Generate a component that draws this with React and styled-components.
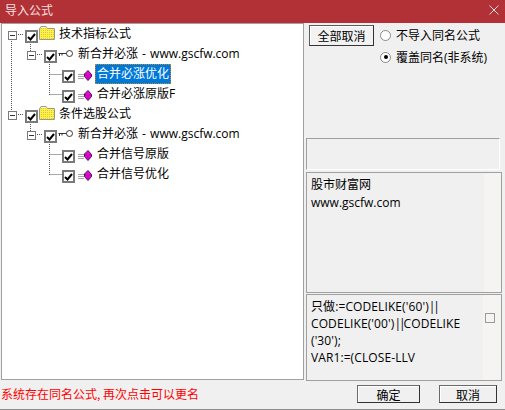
import React from 'react';
import styled, { createGlobalStyle } from 'styled-components';

const GlobalStyle = createGlobalStyle`
   html, body {
      margin: 0;
      padding: 0;
      background: #F0F0F0;
   }
   body {
      font-family: "Open Sans", "Noto Sans CJK SC", sans-serif;
      font-size: 12px;
      color: #000;
   }
`;

const tree = [
   { level: 0, kind: 'folder', label: '技术指标公式' },
   { level: 1, kind: 'key', label: '新合并必涨 - www.gscfw.com' },
   { level: 2, kind: 'gem', label: '合并必涨优化', selected: true },
   { level: 2, kind: 'gem', label: '合并必涨原版F' },
   { level: 0, kind: 'folder', label: '条件选股公式' },
   { level: 1, kind: 'key', label: '新合并必涨 - www.gscfw.com' },
   { level: 2, kind: 'gem', label: '合并信号原版' },
   { level: 2, kind: 'gem', label: '合并信号优化' },
];

const FolderIcon = () => (
   <svg width="17" height="14" viewBox="0 0 17 14">
      <defs>
         <pattern id="dither" width="2" height="2" patternUnits="userSpaceOnUse">
            <rect width="2" height="2" fill="#FFF04A" />
            <rect width="1" height="1" fill="#D9C93A" />
         </pattern>
      </defs>
      <path d="M0.5 3 L2 0.5 H7 L8.5 2.5 H15.5 V13.5 H0.5 Z" fill="url(#dither)" stroke="#9A9A80" />
      <path d="M2 1.5 H7" stroke="#FFFDE0" />
   </svg>
);

const KeyIcon = () => (
   <svg width="15" height="8" viewBox="0 0 15 8">
      <circle cx="11.5" cy="3.5" r="3" fill="#FFF" stroke="#333" />
      <path d="M8.5 3.5 H0.5 M1.5 3.5 V6 M4 3.5 V5.5" stroke="#333" fill="none" />
   </svg>
);

const GemIcon = () => (
   <svg width="17" height="11" viewBox="0 0 17 11">
      <path d="M3 4.5 H9 M3 6.5 H9 M3 8.5 H9" stroke="#A8A8A8" />
      <path d="M13 0.5 L16.5 4.5 V6.5 L13 10.5 L9.5 6.5 V4 Z" fill="#F000E0" stroke="#4A1050" />
      <path d="M10 4.5 L13 6 L16 4.5 M13 6 V10" stroke="#A0109A" fill="none" />
   </svg>
);

const icons = { folder: <FolderIcon />, key: <KeyIcon />, gem: <GemIcon /> };

const TreeGuides = () => (
   <GuideLayer width="100" height="170" viewBox="0 0 100 170">
      <path
         d="M10.5 15 V86 M15 10.5 H23 M29.5 20 V27 M34 30.5 H42 M48.5 40 V71 M48.5 50.5 H61 M48.5 70.5 H61 M15 90.5 H23 M29.5 100 V107 M34 110.5 H42 M48.5 120 V151 M48.5 130.5 H61 M48.5 150.5 H61"
         stroke="#555"
         strokeDasharray="1 1"
         fill="none"
      />
   </GuideLayer>
);

const TreeRow = ({ level, kind, label, selected }) => (
   <Row $level={level}>
      {level < 2 && <Expander />}
      <CheckBox>
         <svg width="9" height="8" viewBox="0 0 9 8">
            <path d="M1 4 L3.5 6.5 L8 1" stroke="#000" strokeWidth="2" fill="none" />
         </svg>
      </CheckBox>
      <IconSlot $kind={kind}>{icons[kind]}</IconSlot>
      <RowLabel $selected={selected}>{label}</RowLabel>
   </Row>
);

const App = () => {
   return (
      <Dialog>
         <GlobalStyle />
         <TitleBar>
            <span>导入公式</span>
            <svg width="10" height="10" viewBox="0 0 10 10">
               <path d="M0.5 0.5 L9.5 9.5 M9.5 0.5 L0.5 9.5" stroke="#F3DADA" fill="none" />
            </svg>
         </TitleBar>

         <Main>
            <TreePanel>
               <TreeGuides />
               {tree.map((item, i) => (
                  <TreeRow key={i} {...item} />
               ))}
            </TreePanel>

            <SidePanel>
               <OptionBar>
                  <ClearButton>全部取消</ClearButton>
                  <RadioGroup>
                     <RadioRow>
                        <Radio />
                        不导入同名公式
                     </RadioRow>
                     <RadioRow>
                        <Radio $checked />
                        覆盖同名(非系统)
                     </RadioRow>
                  </RadioGroup>
               </OptionBar>
               <EmptyBox />
               <InfoBox>
                  股市财富网
                  <br />
                  www.gscfw.com
               </InfoBox>
               <CodeBox>
                  <CodeText>
                     只做:=CODELIKE('60')<Pipes>||</Pipes>
                     <br />
                     CODELIKE('00')<Pipes>||</Pipes>CODELIKE
                     <br />
                     ('30');
                     <br />
                     VAR1:=(CLOSE-LLV
                  </CodeText>
                  <ScrollGutter>
                     <SmallBox />
                  </ScrollGutter>
               </CodeBox>
            </SidePanel>
         </Main>

         <Footer>
            <Notice>系统存在同名公式, 再次点击可以更名</Notice>
            <FooterButton $width={63}>确定</FooterButton>
            <FooterButton $width={58}>取消</FooterButton>
         </Footer>
      </Dialog>
   );
};

const Dialog = styled.div`
   width: 505px;
   height: 410px;
   display: flex;
   flex-direction: column;
   box-sizing: border-box;
   border-bottom: 1px solid #8C8C8C;
   background: #F0F0F0;
   overflow: hidden;
`;

const TitleBar = styled.header`
   height: 23px;
   flex: none;
   display: flex;
   align-items: center;
   justify-content: space-between;
   padding: 0 6px 4px 5px;
   box-sizing: border-box;
   background: #B13136;
   color: #F4E0E0;
   font-family: "Noto Sans CJK SC", sans-serif;
   font-size: 12px;
`;

const Main = styled.main`
   height: 357px;
   flex: none;
   display: flex;
`;

const TreePanel = styled.section`
   position: relative;
   width: 303px;
   margin-left: 1px;
   padding-top: 3px;
   box-sizing: border-box;
   background: #FFF;
   border: 1px solid #A0A0A0;
`;

const GuideLayer = styled.svg`
   position: absolute;
   left: -1px;
   top: 0;
`;

const Row = styled.div`
   position: relative;
   height: 20px;
   display: flex;
   align-items: center;
   padding-left: ${(p) => [6, 25, 60][p.$level]}px;
`;

const Expander = styled.span`
   position: relative;
   width: 9px;
   height: 9px;
   margin: 0 8px 4px 0;
   box-sizing: border-box;
   flex: none;
   background: #FFF;
   border: 1px solid #7A7A7A;
   &::after {
      content: '';
      position: absolute;
      left: 1px;
      top: 3px;
      width: 5px;
      height: 1px;
      background: #333;
   }
`;

const CheckBox = styled.span`
   width: 13px;
   height: 13px;
   margin-bottom: 1px;
   flex: none;
   display: flex;
   align-items: center;
   justify-content: center;
   box-sizing: border-box;
   background: #FFF;
   border: 2px solid #7A7A7A;
`;

const iconOffset = { folder: 8, key: 7, gem: 4 };

const IconSlot = styled.span`
   display: flex;
   align-items: center;
   flex: none;
   width: ${(p) => (p.$kind === 'gem' ? 20 : 19)}px;
   padding-left: ${(p) => (p.$kind === 'gem' ? 0 : 1)}px;
   margin-bottom: ${(p) => iconOffset[p.$kind]}px;
   box-sizing: border-box;
`;

const RowLabel = styled.span`
   height: 20px;
   margin-bottom: 6px;
   padding: 0 2px;
   line-height: 20px;
   box-sizing: border-box;
   font-size: 12px;
   word-spacing: 1px;
   white-space: nowrap;
   color: ${(p) => (p.$selected ? '#FFF' : '#000')};
   background: ${(p) => (p.$selected ? '#0078D7' : 'transparent')};
   outline: ${(p) => (p.$selected ? '1px dotted #B98A2E' : 'none')};
   outline-offset: -1px;
`;

const SidePanel = styled.aside`
   width: 200px;
   display: flex;
   flex-direction: column;
   padding-left: 2px;
   box-sizing: border-box;
`;

const OptionBar = styled.div`
   height: 115px;
   flex: none;
   display: flex;
   align-items: flex-start;
   padding: 2px 0 0 3px;
   box-sizing: border-box;
`;

const ClearButton = styled.button`
   width: 65px;
   height: 21px;
   padding: 0;
   margin-right: 6px;
   flex: none;
   font: inherit;
   color: #000;
   background: #F2F2F2;
   border: 1px solid #5A5A5A;
   border-right-color: #333;
   border-bottom-color: #333;
   box-shadow: inset 1px 1px 0 #FFF;
`;

const RadioGroup = styled.div`
   display: flex;
   flex-direction: column;
   margin-top: -1px;
`;

const RadioRow = styled.label`
   height: 22px;
   display: flex;
   align-items: center;
   gap: 5px;
   white-space: nowrap;
`;

const Radio = styled.span`
   position: relative;
   width: 11px;
   height: 11px;
   flex: none;
   box-sizing: border-box;
   border-radius: 50%;
   background: #FFF;
   border: 1px solid #8A8A8A;
   &::after {
      content: '';
      display: ${(p) => (p.$checked ? 'block' : 'none')};
      position: absolute;
      left: 2.5px;
      top: 2.5px;
      width: 4px;
      height: 4px;
      border-radius: 50%;
      background: #000;
   }
`;

const EmptyBox = styled.div`
   width: 194px;
   height: 32px;
   flex: none;
   box-sizing: border-box;
   border: 1px solid #A0A0A0;
   border-right-color: #FFF;
   border-bottom-color: #FFF;
`;

const InfoBox = styled.div`
   width: 196px;
   height: 121px;
   flex: none;
   margin-top: 2px;
   padding: 3px 4px;
   box-sizing: border-box;
   line-height: 18px;
   border: 1px solid #A0A0A0;
   background: linear-gradient(to right, #F0F0F0 177px, #F5F4F2 177px);
`;

const CodeBox = styled.div`
   width: 196px;
   height: 87px;
   flex: none;
   margin-top: 1px;
   display: flex;
   box-sizing: border-box;
   border: 1px solid #A0A0A0;
`;

const CodeText = styled.div`
   width: 176px;
   padding: 3px 4px;
   box-sizing: border-box;
   line-height: 17px;
   letter-spacing: 0.1px;
   white-space: nowrap;
`;

const Pipes = styled.span`
   letter-spacing: -2px;
`;

const ScrollGutter = styled.div`
   flex: 1;
   padding: 18px 0 0 2px;
   background: #F5F4F2;
`;

const SmallBox = styled.span`
   display: block;
   width: 10px;
   height: 10px;
   box-sizing: border-box;
   border: 1px solid #9A9A9A;
`;

const Footer = styled.footer`
   flex: 1;
   display: flex;
   align-items: flex-start;
   padding: 5px 8px 0 1px;
   box-sizing: border-box;
`;

const Notice = styled.span`
   flex: 1;
   line-height: 14px;
   padding-top: 2px;
   color: #F00;
   font-family: "Noto Sans CJK SC", sans-serif;
   font-size: 12px;
   white-space: nowrap;
`;

const FooterButton = styled.button`
   width: ${(p) => p.$width}px;
   height: 18px;
   padding: 0;
   margin-left: 19px;
   font: inherit;
   color: #000;
   background: #F0F0F0;
   border: 1px solid #6A6A6A;
   border-right-color: #333;
   border-bottom-color: #333;
   box-shadow: inset 1px 1px 0 #FFF;
`;

export default App;
